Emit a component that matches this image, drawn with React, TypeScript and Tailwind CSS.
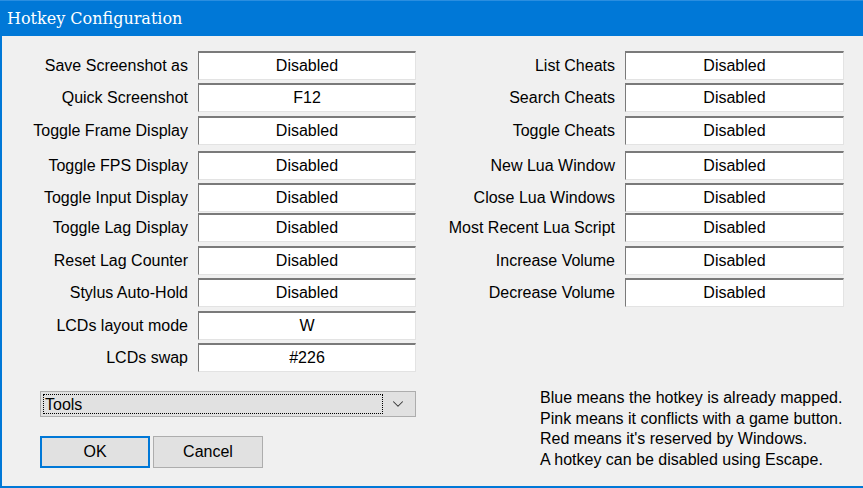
import { ChevronDown } from 'lucide-react'

interface HotkeyRow {
  label: string
  value: string
}

const leftRows: HotkeyRow[] = [
  { label: 'Save Screenshot as', value: 'Disabled' },
  { label: 'Quick Screenshot', value: 'F12' },
  { label: 'Toggle Frame Display', value: 'Disabled' },
  { label: 'Toggle FPS Display', value: 'Disabled' },
  { label: 'Toggle Input Display', value: 'Disabled' },
  { label: 'Toggle Lag Display', value: 'Disabled' },
  { label: 'Reset Lag Counter', value: 'Disabled' },
  { label: 'Stylus Auto-Hold', value: 'Disabled' },
  { label: 'LCDs layout mode', value: 'W' },
  { label: 'LCDs swap', value: '#226' },
]

const rightRows: HotkeyRow[] = [
  { label: 'List Cheats', value: 'Disabled' },
  { label: 'Search Cheats', value: 'Disabled' },
  { label: 'Toggle Cheats', value: 'Disabled' },
  { label: 'New Lua Window', value: 'Disabled' },
  { label: 'Close Lua Windows', value: 'Disabled' },
  { label: 'Most Recent Lua Script', value: 'Disabled' },
  { label: 'Increase Volume', value: 'Disabled' },
  { label: 'Decrease Volume', value: 'Disabled' },
]

// the dialog's rows are not evenly spaced, so each row gets its own height
const rowHeights = ['h-[32px]', 'h-[33px]', 'h-[35px]', 'h-[32px]', 'h-[30px]', 'h-[33px]', 'h-[32px]', 'h-[33px]', 'h-[32px]', 'h-[29px]']

const helpLines = [
  'Blue means the hotkey is already mapped.',
  'Pink means it conflicts with a game button.',
  "Red means it's reserved by Windows.",
  'A hotkey can be disabled using Escape.',
]

function HotkeyField({ value, width }: { value: string; width: string }) {
  return (
    <div
      className={`${width} h-[29px] shrink-0 bg-white border-t-2 border-l border-b border-r border-t-[#7a7a7a] border-l-[#7a7a7a] border-b-[#e3e3e3] border-r-[#e3e3e3] flex items-center justify-center`}
    >
      {value}
    </div>
  )
}

function HotkeyColumn({ rows, labelWidth, fieldWidth }: { rows: HotkeyRow[]; labelWidth: string; fieldWidth: string }) {
  return (
    <div className="flex flex-col">
      {rows.map((row, i) => (
        <div key={row.label} className={`${rowHeights[i]} flex items-start gap-[10px]`}>
          <div className={`${labelWidth} h-[29px] shrink-0 flex items-center justify-end whitespace-nowrap`}>
            {row.label}
          </div>
          <HotkeyField value={row.value} width={fieldWidth} />
        </div>
      ))}
    </div>
  )
}

export default function App() {
  return (
    <div
      className="w-[863px] h-[488px] flex flex-col bg-[#f0f0f0] text-black text-[16px] overflow-hidden"
      style={{ fontFamily: '"Liberation Sans", Arial, sans-serif' }}
    >
      <div className="h-[36px] shrink-0 bg-[#0078d7] border-t border-t-[#2a8ee0] flex items-center pl-[7px]">
        <span className="text-white text-[16px]" style={{ fontFamily: '"DejaVu Serif", serif' }}>
          Hotkey Configuration
        </span>
      </div>

      <div className="flex-1 flex flex-col border-l-2 border-b-2 border-[#0078d7] pt-[15px]">
        <div className="flex">
          <HotkeyColumn rows={leftRows} labelWidth="w-[186px]" fieldWidth="w-[218px]" />
          <div className="ml-[19px]">
            <HotkeyColumn rows={rightRows} labelWidth="w-[180px]" fieldWidth="w-[219px]" />
          </div>
        </div>

        <div className="flex mt-[19px]">
          <div className="ml-[38px] w-[376px] flex flex-col">
            <div className="h-[26px] bg-[#e1e1e1] border border-[#adadad] flex items-center p-[2px]">
              <div className="flex-1 h-full border border-dotted border-black flex items-center pl-[1px] pt-[2px] leading-none">
                Tools
              </div>
              <div className="w-[30px] shrink-0 flex items-center justify-center text-[#333]">
                <ChevronDown className="w-[18px] h-[18px]" strokeWidth={1.4} />
              </div>
            </div>
            <div className="flex gap-[3px] mt-[19px]">
              <button className="w-[110px] h-[32px] bg-[#e1e1e1] border-2 border-[#0078d7] flex items-center justify-center">
                OK
              </button>
              <button className="w-[110px] h-[32px] bg-[#e1e1e1] border border-[#adadad] flex items-center justify-center">
                Cancel
              </button>
            </div>
          </div>
          <div className="ml-[124px] -mt-[3px] flex flex-col leading-[20.5px]">
            {helpLines.map(line => (
              <div key={line} className="whitespace-nowrap">{line}</div>
            ))}
          </div>
        </div>
      </div>
    </div>
  )
}
